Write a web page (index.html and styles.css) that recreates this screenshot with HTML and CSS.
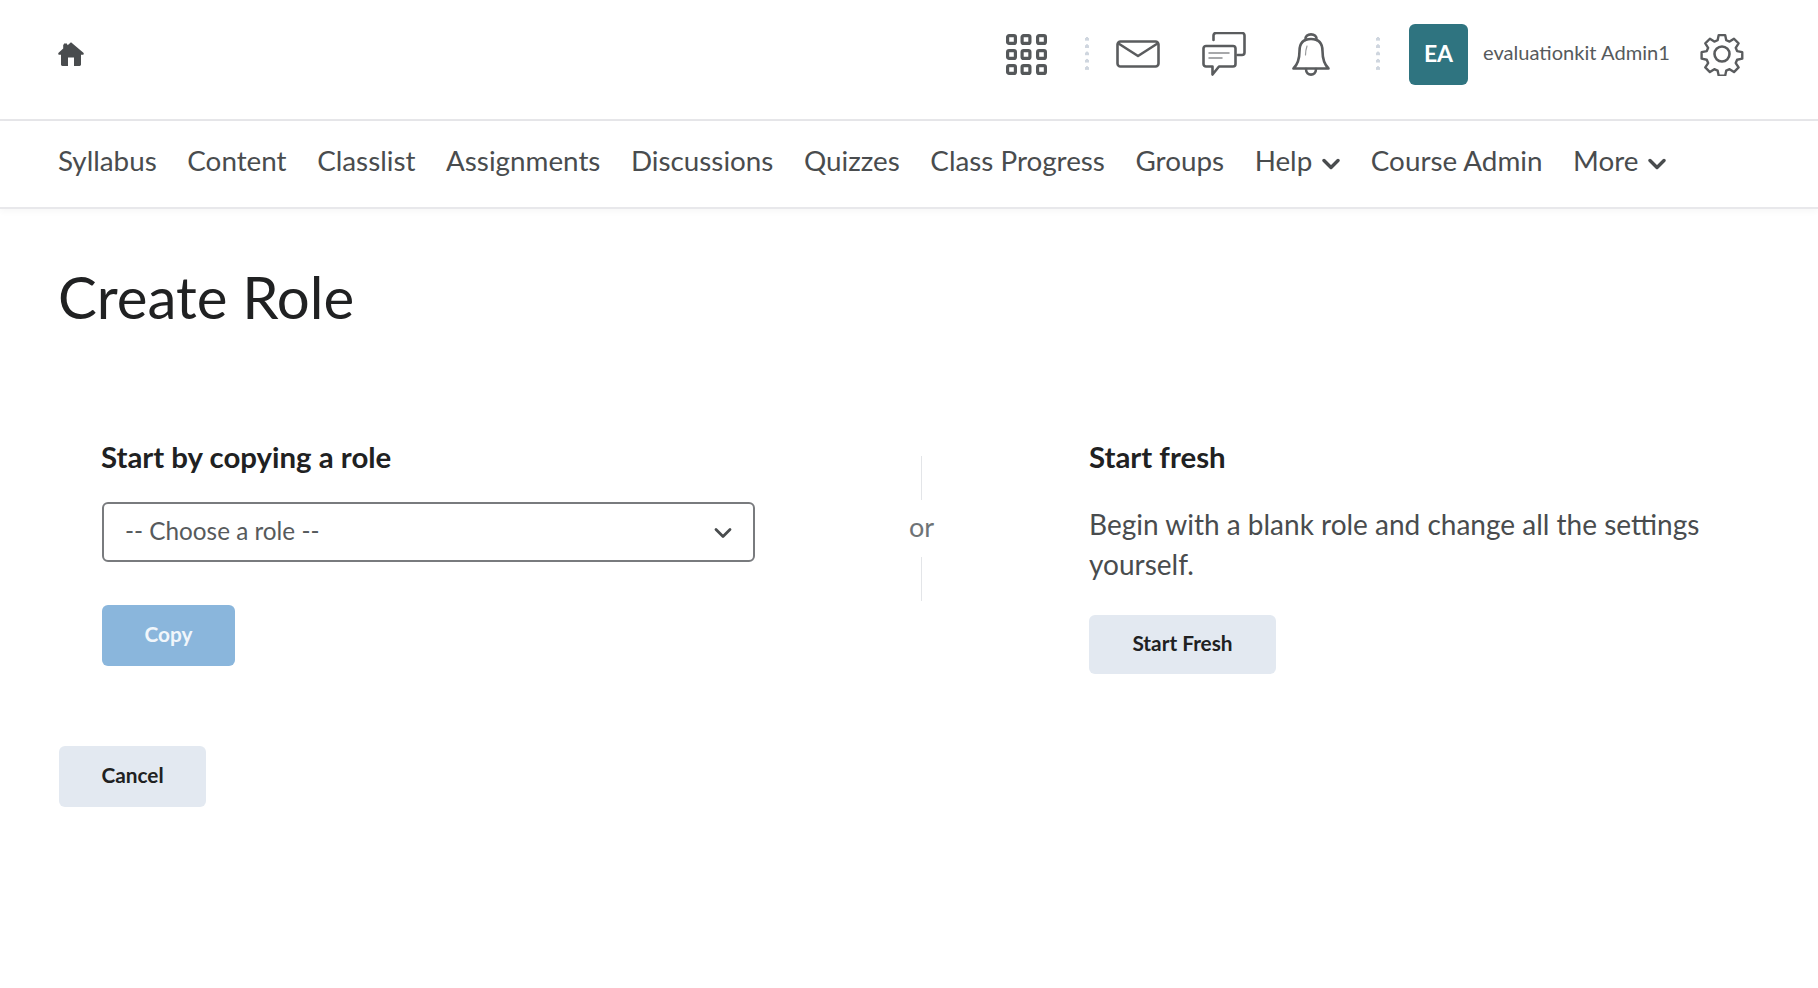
FILE: index.html
```html
<!DOCTYPE html>
<html lang="en">
<head>
<meta charset="utf-8">
<title>Create Role</title>
<link rel="stylesheet" href="styles.css">
</head>
<body>
<header class="topbar">
  <a class="home" aria-label="Home">
    <svg viewBox="0 0 26 26" width="26" height="26"><path fill="#494c4e" d="M13 1.200 9.600 4.200V3.400H8.800L5.200 3.400V7.600L.6 11.800c-.8.8-.2 2 .8 2H3V23.600c0 .9.6 1.400 1.400 1.400H10V16.600h6V25h5.600c.8 0 1.400-.5 1.400-1.400V13.800h1.600c1 0 1.600-1.200.8-2Z"/><path fill="#494c4e" d="M6 2.500h3v5H6z"/></svg>
  </a>
  <div class="tools">
    <svg class="ic-grid" viewBox="0 0 41 41" width="41" height="41" fill="none" stroke="#55585a" stroke-width="3.200">
      <rect x="1.600" y="1.600" width="7.800" height="7.800" rx="1.500"/><rect x="16.100" y="1.600" width="7.800" height="7.800" rx="1.500"/><rect x="31.600" y="1.600" width="7.800" height="7.800" rx="1.500"/>
      <rect x="1.600" y="16.600" width="7.800" height="7.800" rx="1.500"/><rect x="16.100" y="16.600" width="7.800" height="7.800" rx="1.500"/><rect x="31.600" y="16.600" width="7.800" height="7.800" rx="1.500"/>
      <rect x="1.600" y="31.600" width="7.800" height="7.800" rx="1.500"/><rect x="16.100" y="31.600" width="7.800" height="7.800" rx="1.500"/><rect x="31.600" y="31.600" width="7.800" height="7.800" rx="1.500"/>
    </svg>
    <span class="sep sep-a"></span>
    <svg class="ic-mail" viewBox="0 0 44 28" width="44" height="28" fill="none" stroke="#5a5c5e" stroke-width="2.600" stroke-linejoin="round" stroke-linecap="round">
      <rect x="1.500" y="1.500" width="41" height="25" rx="3"/><path d="M2.500 3.500 22 16 41.500 3.500"/>
    </svg>
    <svg class="ic-chat" viewBox="0 0 44 44" width="44" height="44" fill="none" stroke="#5a5c5e" stroke-width="2.600" stroke-linejoin="round" stroke-linecap="round">
      <path d="M11.500 8V3.500a2.500 2.500 0 0 1 2.500-2.500H40a2.500 2.500 0 0 1 2.500 2.500V20.500a2.500 2.500 0 0 1-2.500 2.500h-4.500"/>
      <path d="M4 14H31a2.500 2.500 0 0 1 2.500 2.500V32a2.500 2.500 0 0 1-2.500 2.500H17L10.500 42.500V34.500H4A2.500 2.500 0 0 1 1.500 32V16.500A2.500 2.500 0 0 1 4 14Z"/>
      <path d="M7 21H27M7 26H20" stroke-width="1.500" stroke="#8a8c8e"/>
    </svg>
    <svg class="ic-bell" viewBox="0 0 38 44" width="38" height="44" fill="none" stroke="#5a5c5e" stroke-width="2.600" stroke-linejoin="round" stroke-linecap="round">
      <path d="M13.500 8C12 .5 26 .5 24.500 8"/>
      <path d="M19 7C11 7 7.500 11 7.500 19 7.500 28 5 33 1.500 36.500H36.500C33 33 30.500 28 30.500 19 30.500 11 27 7 19 7Z"/>
      <path d="M14 37c0 7.500 10 7.500 10 0"/>
      <path d="M15 14c-1 3-1.500 6-1.500 9" stroke-width="1.200" stroke="#9a9c9e"/>
    </svg>
    <span class="sep sep-b"></span>
    <div class="avatar">EA</div>
    <span class="username">evaluationkit Admin1</span>
    <svg class="ic-gear" viewBox="0 0 44 44" width="44" height="44" fill="none" stroke="#5a5c5e" stroke-width="2.600" stroke-linejoin="round">
      <path d="M18.500 1.500h7l1.200 5.600 3.600 1.500 4.800-3.100 5 5-3.100 4.800 1.500 3.600 5.600 1.200v7l-5.600 1.200-1.500 3.600 3.100 4.800-5 5-4.800-3.100-3.600 1.500-1.200 5.600h-7l-1.200-5.600-3.600-1.500-4.800 3.100-5-5 3.100-4.800-1.500-3.600-5.600-1.200v-7l5.600-1.200 1.500-3.600-3.100-4.800 5-5 4.800 3.100 3.600-1.500Z" transform="translate(1.700 1.700) scale(.92)"/>
      <circle cx="22" cy="22" r="7.500"/>
    </svg>
  </div>
</header>
<nav class="navbar">
  <a>Syllabus</a>
  <a>Content</a>
  <a>Classlist</a>
  <a>Assignments</a>
  <a>Discussions</a>
  <a>Quizzes</a>
  <a>Class Progress</a>
  <a>Groups</a>
  <a class="has-menu">Help<svg viewBox="0 0 18 12" width="18" height="12" fill="none" stroke="#494c4e" stroke-width="3.400" stroke-linecap="round" stroke-linejoin="round"><path d="M2 2.500 9 9.500 16 2.500"/></svg></a>
  <a>Course Admin</a>
  <a class="has-menu">More<svg viewBox="0 0 18 12" width="18" height="12" fill="none" stroke="#494c4e" stroke-width="3.400" stroke-linecap="round" stroke-linejoin="round"><path d="M2 2.500 9 9.500 16 2.500"/></svg></a>
</nav>
<main class="page">
  <h1 class="title">Create Role</h1>
  <section class="choices">
    <div class="col-copy">
      <h2 class="heading">Start by copying a role</h2>
      <div class="select">
        <span>-- Choose a role --</span>
        <svg viewBox="0 0 18 12" width="18" height="12" fill="none" stroke="#494c4e" stroke-width="2.800" stroke-linecap="round" stroke-linejoin="round"><path d="M2 2.500 9 9.500 16 2.500"/></svg>
      </div>
      <button class="btn btn-primary">Copy</button>
    </div>
    <div class="col-or">
      <span class="rule"></span>
      <span class="or">or</span>
      <span class="rule"></span>
    </div>
    <div class="col-fresh">
      <h2 class="heading">Start fresh</h2>
      <p class="desc">Begin with a blank role and change all the settings yourself.</p>
      <button class="btn btn-fresh">Start Fresh</button>
    </div>
  </section>
  <button class="btn btn-cancel">Cancel</button>
</main>
</body>
</html>
```

FILE: styles.css
```css
* { box-sizing: border-box; }
html, body { margin: 0; padding: 0; background: #fff; }
body { font-family: Lato, "Open Sans", sans-serif; color: #202122; height: 988px; overflow: hidden; }

.topbar {
  height: 121px;
  display: flex;
  align-items: center;
  justify-content: space-between;
  padding: 0 74px 11px 58px;
  border-bottom: 2px solid #e6e6e9;
}
.home { display: block; height: 26px; }
.home svg { display: block; }
.tools { display: flex; align-items: center; }
.tools svg { display: block; flex: none; }
.sep { width: 4px; height: 34px; flex: none; background: radial-gradient(circle at 2px 2px, #cfd6df 2px, transparent 2.100px) 0 0 / 4px 7.300px repeat-y; }
.sep-a { margin: 0 27px 0 38px; }
.ic-chat { margin-left: 42px; }
.ic-bell { margin-left: 46px; }
.sep-b { margin: 0 29px 0 46px; }
.avatar {
  width: 59px; height: 61px; padding-bottom: 2px; border-radius: 6px; background: #2f7480; color: #fff;
  font-weight: 700; font-size: 23px; display: flex; align-items: center; justify-content: center;
}
.username { margin: -4px 0 0 15px; width: 217px; font-size: 20.100px; color: #565a5c; white-space: nowrap; }

.navbar {
  height: 88px;
  display: flex;
  align-items: center;
  gap: 30.600px;
  padding: 0 58px 7px;
  font-size: 27.800px;
  color: #494c4e;
  border-bottom: 2px solid #e8e8eb;
  box-shadow: 0 3px 6px rgba(0,0,0,.03);
}
.navbar a { display: flex; align-items: center; white-space: nowrap; }
.has-menu svg { margin: 6px 0 0 10px; }

.page { padding: 0 58px; }
.title { margin: 54px 0 0; height: 68px; font-size: 58.200px; line-height: 68px; font-weight: 400; color: #202122; }

.choices { display: flex; margin-top: 106px; height: 321px; padding-left: 43px; }
.col-copy { width: 655px; flex: none; }
.col-or { width: 333px; flex: none; display: flex; flex-direction: column; align-items: center; padding: 19px 2px 0 0; }
.col-fresh { width: 625px; flex: none; }

.heading { margin: 0; height: 39px; font-size: 29.400px; line-height: 39px; font-weight: 700; color: #202122; white-space: nowrap; }

.select {
  margin: 26px 0 0 1px; width: 653px; height: 60px; padding: 0 21px 4px 21px;
  border: 2px solid #797b7e; border-radius: 6px;
  display: flex; align-items: center; justify-content: space-between;
  font-size: 24.300px; color: #565a5c;
}
.select svg { margin-top: 5px; }

.rule { width: 1px; height: 44px; background: #e3e5e8; }
.or { height: 57px; line-height: 54px; font-size: 27px; color: #6e7376; }

.desc { margin: 29px 0 0; font-size: 28px; line-height: 39.500px; color: #494c4e; }

.btn { display: block; border: 0; border-radius: 6px; font-family: inherit; font-weight: 700; font-size: 20.800px; padding: 0 0 4px; }
.btn-primary { margin: 43px 0 0 1px; width: 133px; height: 61px; padding-bottom: 5px; background: #8ab6dc; color: #f1f6fb; }
.btn-fresh { margin-top: 31px; width: 187px; height: 59px; background: #e3e9f1; color: #202122; }
.btn-cancel { margin: -12px 0 0 1px; width: 147px; height: 61px; background: #e3e9f1; color: #202122; }
```
